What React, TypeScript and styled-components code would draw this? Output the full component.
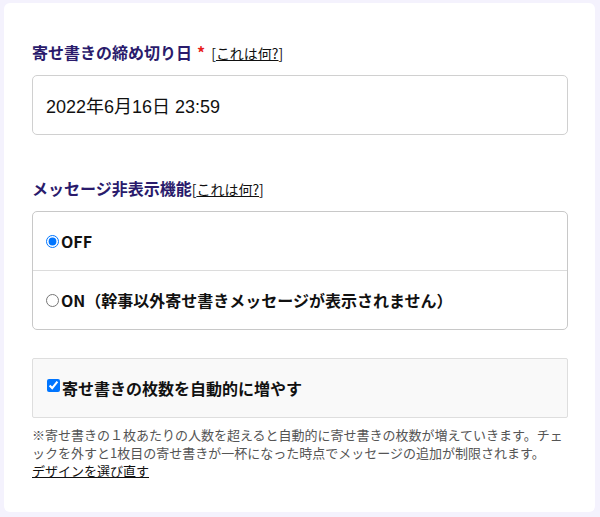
import React from "react";
import styled, { createGlobalStyle } from "styled-components";

const Global = createGlobalStyle`
  html, body { margin: 0; padding: 0; background: #f4f2fd; }
  body { font-family: "Noto Sans CJK JP", "Noto Sans", sans-serif; color: #222; }
`;

const Page = styled.div`
  padding: 3px 5px 5px 4px;
`;

const Card = styled.div`
  background: #fff;
  border-radius: 6px;
  height: 509px;
  box-sizing: border-box;
  padding: 37px 27px 0 28px;
`;

const Section = styled.div<{ $gap?: number }>`
  margin-top: ${(p) => p.$gap ?? 0}px;
`;

const Label = styled.div`
  display: flex;
  align-items: baseline;
  height: 24px;
  line-height: 24px;
  margin-bottom: 11px;
`;

const LabelText = styled.span`
  font-size: 16px;
  font-weight: 700;
  color: #2a1b6c;
`;

const Required = styled.span`
  color: #e8201c;
  font-size: 16px;
  font-weight: 700;
  margin: 0 6px 0 5px;
`;

const Help = styled.span`
  font-size: 14px;
  color: #111;
  a {
    color: #111;
    text-decoration: underline;
  }
`;

const TextInput = styled.input`
  display: block;
  width: 100%;
  box-sizing: border-box;
  height: 60px;
  border: 1px solid #d0d0d0;
  border-radius: 5px;
  padding: 0 13px;
  font-family: "Liberation Sans", "Noto Sans CJK JP", sans-serif;
  font-size: 18px;
  color: #111;
  outline: none;
  background: #fff;
`;

const Group = styled.div`
  border: 1px solid #c8c8c8;
  border-radius: 5px;
  overflow: hidden;
`;

const Option = styled.label<{ $first?: boolean }>`
  display: flex;
  align-items: center;
  height: 58px;
  padding: 0 13px;
  border-top: ${(p) => (p.$first ? "none" : "1px solid #dcdcdc")};
  font-size: 16px;
  font-weight: 700;
  color: #111;
  input {
    margin: 0 2px 0 0;
    width: 13px;
    height: 13px;
  }
`;

const CheckBox = styled.label`
  display: flex;
  align-items: center;
  height: 60px;
  box-sizing: border-box;
  border: 1px solid #dedede;
  border-radius: 2px;
  background: #f9f9f9;
  padding: 0 14px;
  font-size: 16px;
  font-weight: 700;
  color: #111;
  input {
    margin: 0 2px 6px 0;
    width: 13px;
    height: 13px;
  }
`;

const Note = styled.p`
  margin: 8px 0 0;
  font-size: 13px;
  line-height: 18px;
  color: #555;
  a {
    color: #111;
    text-decoration: underline;
  }
`;

export default function App() {
  return (
    <>
      <Global />
      <Page>
        <Card>
          <Section>
            <Label>
              <LabelText>寄せ書きの締め切り日</LabelText>
              <Required>*</Required>
              <Help>
                [<a href="#">これは何?</a>]
              </Help>
            </Label>
            <TextInput defaultValue="2022年6月16日 23:59" readOnly />
          </Section>
          <Section $gap={41}>
            <Label>
              <LabelText>メッセージ非表示機能</LabelText>
              <Help>
                [<a href="#">これは何?</a>]
              </Help>
            </Label>
            <Group>
              <Option $first>
                <input type="radio" name="hide" defaultChecked />
                OFF
              </Option>
              <Option>
                <input type="radio" name="hide" />
                ON（幹事以外寄せ書きメッセージが表示されません）
              </Option>
            </Group>
          </Section>
          <Section $gap={28}>
            <CheckBox>
              <input type="checkbox" defaultChecked />
              寄せ書きの枚数を自動的に増やす
            </CheckBox>
            <Note>
              ※寄せ書きの１枚あたりの人数を超えると自動的に寄せ書きの枚数が増えていきます。チェックを外すと1枚目の寄せ書きが一杯になった時点でメッセージの追加が制限されます。
              <br />
              <a href="#">デザインを選び直す</a>
            </Note>
          </Section>
        </Card>
      </Page>
    </>
  );
}
